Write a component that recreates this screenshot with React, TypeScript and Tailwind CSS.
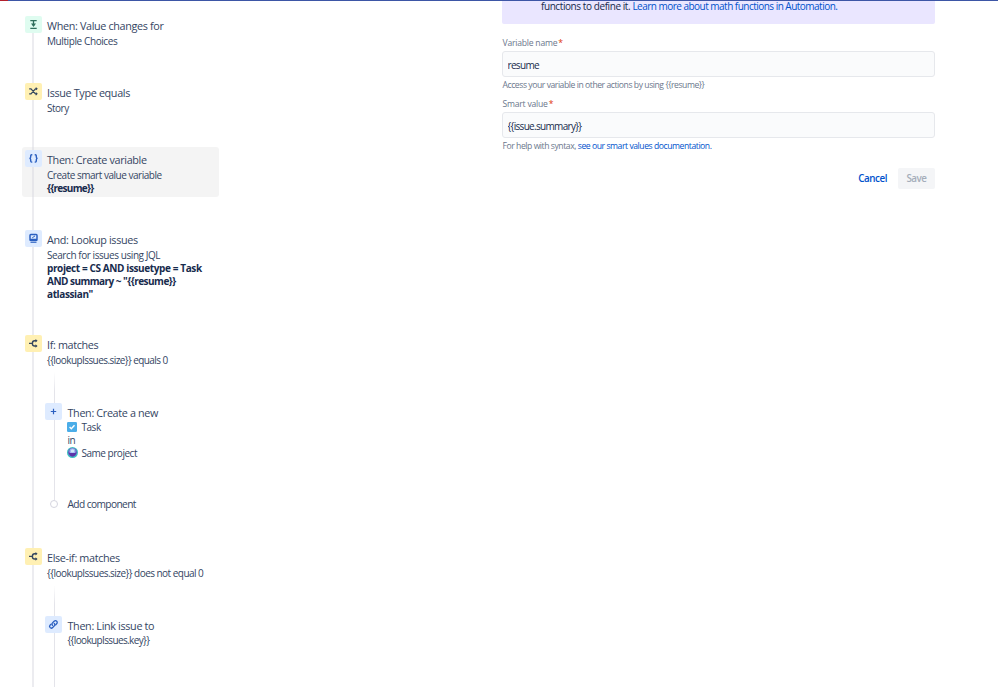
import React from "react";
import { clsx } from "clsx";

type Tone = "green" | "yellow" | "blue";

const tones: Record<Tone, string> = {
  green: "bg-[#dffcf0] text-[#2f6f5c]",
  yellow: "bg-[#fff0b3] text-[#34465f]",
  blue: "bg-[#deebff] text-[#2a5fc0]",
};

const stroke = {
  fill: "none",
  stroke: "currentColor",
  strokeWidth: 1.3,
} as const;

const TriggerIcon = () => (
  <svg width="17" height="17" viewBox="0 0 17 17">
    <path d="M5.3 4.6h6.4M5.3 12.4h6.4" {...stroke} strokeWidth={1.1} />
    <path d="M8.5 5v5" {...stroke} />
    <path d="M6 7.6h5L8.5 10.9z" fill="currentColor" />
  </svg>
);

const ShuffleIcon = () => (
  <svg width="17" height="17" viewBox="0 0 17 17">
    <path d="M4.2 5.8h1.8l4.4 5h1.4M4.2 10.8h1.8l4.4-5h1.4" {...stroke} strokeWidth={1.2} />
    <path d="M10.8 3.9l2 1.9-2 1.8zM10.8 9l2 1.8-2 1.9z" fill="currentColor" />
  </svg>
);

const BracesIcon = () => (
  <svg width="17" height="17" viewBox="0 0 17 17">
    <path
      d="M7.3 4.7H6.7c-.7 0-1 .4-1 1v1.4c0 .8-.5 1.3-1.3 1.3.8 0 1.3.5 1.3 1.3v1.4c0 .6.3 1 1 1h.6M9.7 4.7h.6c.7 0 1 .4 1 1v1.4c0 .8.5 1.3 1.3 1.3-.8 0-1.3.5-1.3 1.3v1.4c0 .6-.3 1-1 1h-.6"
      {...stroke}
      strokeWidth={1.4}
    />
  </svg>
);

const LookupIcon = () => (
  <svg width="17" height="17" viewBox="0 0 17 17">
    <rect x="5" y="4.6" width="7" height="4.8" rx="0.8" {...stroke} strokeWidth={1.5} />
    <path d="M7.2 7.9l2.8-2" {...stroke} strokeWidth={1} />
    <path d="M4.3 9.3h8.4v.5c0 .8-.5 1.3-1.3 1.3H5.6c-.8 0-1.3-.5-1.3-1.3z" fill="currentColor" />
    <path d="M5.5 12.2h6" {...stroke} strokeWidth={1.2} />
  </svg>
);

const BranchIcon = () => (
  <svg width="17" height="17" viewBox="0 0 17 17">
    <path d="M4 8.4h3.4M11.2 5.8H9.6C8.2 5.8 7.4 7 7.4 8.4s.8 2.6 2.2 2.6h1.6" {...stroke} strokeWidth={1.4} />
    <path d="M10.5 4.1l2.1 1.7-2.1 1.7zM10.5 9.3l2.1 1.7-2.1 1.7z" fill="currentColor" />
  </svg>
);

const PlusIcon = () => (
  <svg width="17" height="17" viewBox="0 0 17 17">
    <path d="M8.5 5.8v5.4M5.8 8.5h5.4" {...stroke} strokeWidth={1.2} />
  </svg>
);

const LinkIcon = () => (
  <svg width="17" height="17" viewBox="0 0 17 17">
    <g {...stroke} strokeWidth={1.3} strokeLinecap="round">
      <path d="M7.6 9.4c-.8-.8-.8-1.8-.1-2.5l1.6-1.6c.8-.8 1.9-.8 2.6-.1s.7 1.8-.1 2.6l-.9.9" />
      <path d="M9.2 7.4c.8.8.8 1.8.1 2.5l-1.6 1.6c-.8.8-1.9.8-2.6.1s-.7-1.8.1-2.6l.9-.9" />
    </g>
  </svg>
);

const TaskIcon = () => (
  <svg width="10" height="10" viewBox="0 0 10 10">
    <rect width="10" height="10" rx="1.2" fill="#4bade8" />
    <path d="M2.6 5.1l1.7 1.7 3.2-3.5" fill="none" stroke="#fff" strokeWidth="1.4" />
  </svg>
);

const ProjectIcon = () => (
  <svg width="11" height="11" viewBox="0 0 11 11">
    <circle cx="5.5" cy="5.5" r="5.5" fill="#3cc0c0" />
    <circle cx="5.5" cy="5.3" r="4.3" fill="#6a4fc0" />
    <circle cx="5.5" cy="4.3" r="3" fill="#9fb4ee" />
    <circle cx="5.5" cy="3.9" r="1.7" fill="#cfe6fa" />
    <path d="M1.8 6h7.4c-.5 2-1.900 3.400-3.700 3.400S2.300 8 1.800 6z" fill="#5a34a8" />
  </svg>
);

interface StepProps {
  title: string;
  tone: Tone;
  icon: React.ReactNode;
  children?: React.ReactNode;
  active?: boolean;
  nested?: boolean;
  // height of the step including the gap to the next one
  className?: string;
}

const Step: React.FC<StepProps> = ({ title, tone, icon, children, active, nested, className }) => (
  <div className={className}>
    <div
      className={clsx(
        "relative flex w-[197px] rounded-[3px] pt-[3px] pl-[3px]",
        nested ? "gap-[5.5px]" : "gap-[5px]",
        active && "h-[50px] bg-[#f4f4f4]"
      )}
    >
      {active && <div className="absolute top-0 left-[10px] h-full w-0.5 bg-[#e6e6ea]" />}
      <div className={clsx("relative h-[17px] w-[17px] shrink-0 rounded-[2px]", tones[tone])}>{icon}</div>
      <div className="pt-[2px] text-[#344563]">
        <h3 className="text-[10.8px] leading-4 tracking-[-0.34px] whitespace-nowrap">{title}</h3>
        <div
          className={clsx(
            "text-[10px] leading-[13px] tracking-[-0.48px] whitespace-nowrap",
            !nested && "pt-px"
          )}
        >
          {children}
        </div>
      </div>
    </div>
  </div>
);

interface FieldProps {
  label: string;
  value: string;
  children: React.ReactNode;
}

const Field: React.FC<FieldProps> = ({ label, value, children }) => (
  <div className="h-[61px]">
    <label className="block pt-px pl-[0.5px] text-[8.6px] leading-[13px] tracking-[-0.22px] text-[#6b778c]">
      {label}
      <span className="ml-px text-[#de350b]">*</span>
    </label>
    <input
      readOnly
      value={value}
      className="mt-px block h-[26px] w-full rounded-[3px] border border-[#e6e8ec] bg-[#fafbfc] px-[4.5px] pt-px text-[10px] tracking-[-0.68px] text-[#172b4d] outline-none"
    />
    <p className="mt-[2px] pl-[0.5px] text-[8.6px] leading-3 tracking-[-0.44px] text-[#6b778c]">{children}</p>
  </div>
);

export default function App() {
  return (
    <div className="relative h-[687px] w-[998px] overflow-hidden bg-white font-['Open_Sans',sans-serif]">
      <div className="flex h-px">
        <div className="w-2 bg-[#b3202c]" />
        <div className="flex-1 bg-[#3d56a6]" />
      </div>

      <div className="flex">
        {/* Rule steps */}
        <div className="relative ml-[22px] w-[480px] shrink-0 pt-3">
          <div className="absolute top-8 left-[10px] h-[660px] w-0.5 bg-[#ececf0]" />
          <div className="relative">
            <Step title="When: Value changes for" tone="green" icon={<TriggerIcon />} className="h-[67px]">
              <span className="tracking-[-0.4px]">Multiple Choices</span>
            </Step>
            <Step title="Issue Type equals" tone="yellow" icon={<ShuffleIcon />} className="h-[67px]">
              Story
            </Step>
            <Step title="Then: Create variable" tone="blue" icon={<BracesIcon />} active className="h-20">
              Create smart value variable
              <br />
              <b className="tracking-[-0.7px] text-[#172b4d]">{"{{resume}}"}</b>
            </Step>
            <Step title="And: Lookup issues" tone="blue" icon={<LookupIcon />} className="h-[105px]">
              <span className="tracking-[-0.43px]">Search for issues using JQL</span>
              <b className="block tracking-[-0.39px] text-[#172b4d]">
                project = CS AND issuetype = Task
                <br />
                <span className="tracking-[-0.52px]">AND summary ~ "{"{{resume}}"}</span>
                <br />
                atlassian"
              </b>
            </Step>
            <Step title="If: matches" tone="yellow" icon={<BranchIcon />} className="h-[68px]">
              <span className="tracking-[-0.57px]">{"{{lookupIssues.size}} equals 0"}</span>
            </Step>

            <div className="relative ml-5 h-[145px]">
              <div className="absolute -top-7 left-[11.5px] h-[128px] w-[1.5px] bg-linear-to-b from-transparent to-[#e4e4ea] to-15%" />
              <Step title="Then: Create a new" tone="blue" icon={<PlusIcon />} nested className="relative h-24">
                <div className="-ml-[0.5px] flex items-center gap-[4.5px]">
                  <span className="-mt-0.5">
                    <TaskIcon />
                  </span>
                  Task
                </div>
                <div>in</div>
                <div className="-ml-[0.5px] flex items-center gap-[3.5px]">
                  <span className="-mt-0.5">
                    <ProjectIcon />
                  </span>
                  Same project
                </div>
              </Step>
              <div className="flex items-center gap-[9.5px] pl-[8px] text-[10.2px] leading-4 tracking-[-0.6px] text-[#344563]">
                <span className="h-2 w-2 rounded-full border border-[#d5d5df] bg-white" />
                Add component
              </div>
            </div>

            <Step title="Else-if: matches" tone="yellow" icon={<BranchIcon />} className="h-[68px]">
              <span className="tracking-[-0.53px]">{"{{lookupIssues.size}} does not equal 0"}</span>
            </Step>

            <div className="relative ml-5 h-[100px]">
              <div className="absolute -top-7 left-[11.5px] h-[128px] w-[1.5px] bg-linear-to-b from-transparent to-[#e4e4ea] to-15%" />
              <Step title="Then: Link issue to" tone="blue" icon={<LinkIcon />} nested className="relative">
                <span className="tracking-[-0.63px]">{"{{lookupIssues.key}}"}</span>
              </Step>
            </div>
          </div>
        </div>

        {/* Variable form */}
        <div className="w-[433px]">
          <div className="h-[23px] rounded-b-[2px] bg-[#eae6ff] pl-[39px] text-[10px] leading-[11px] tracking-[-0.52px] whitespace-nowrap text-[#172b4d]">
            <span className="tracking-[-0.42px]">functions to define it. </span>
            <a className="text-[#0052cc]">Learn more about math functions in Automation.</a>
          </div>
          <div className="mt-3">
            <Field label="Variable name" value="resume">
              Access your variable in other actions by using {"{{resume}}"}
            </Field>
            <Field label="Smart value" value="{{issue.summary}}">
              For help with syntax, <a className="text-[#0052cc]">see our smart values documentation.</a>
            </Field>
          </div>
          <div className="mt-[10px] flex justify-end gap-[5px] text-[9.8px] font-semibold tracking-[-0.45px]">
            <button className="h-[21px] px-1.5 pt-px text-[#0052cc]">Cancel</button>
            <button className="h-[21px] w-[37px] rounded-[2px] bg-[#f4f5f7] pt-px text-[#a5adba]">Save</button>
          </div>
        </div>
      </div>
    </div>
  );
}
